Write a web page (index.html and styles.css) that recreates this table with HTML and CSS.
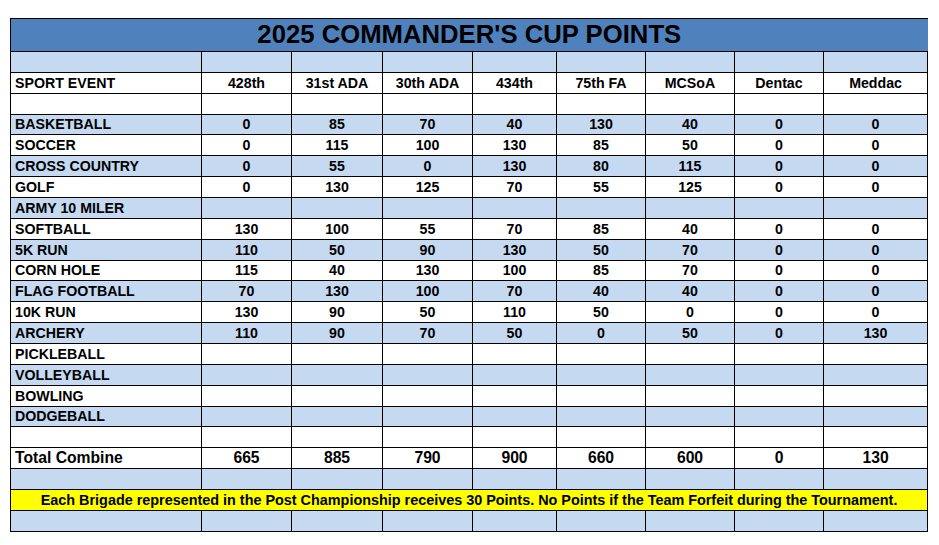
FILE: index.html
```html
<!DOCTYPE html>
<html>
<head>
<meta charset="utf-8">
<title>2025 Commander's Cup Points</title>
<link rel="stylesheet" href="styles.css">
</head>
<body>
<div class="sheet">
<table class="cup">
<colgroup>
<col class="c-event"><col class="c90"><col class="c91"><col class="c90"><col class="c84"><col class="c89"><col class="c89"><col class="c89"><col class="c104">
</colgroup>
<tbody>
<tr class="title-row"><td colspan="9" class="title">2025 COMMANDER'S CUP POINTS</td></tr>
<tr class="blue"><td></td><td></td><td></td><td></td><td></td><td></td><td></td><td></td><td></td></tr>
<tr class="head"><td class="name">SPORT EVENT</td><td>428th</td><td>31st ADA</td><td>30th ADA</td><td>434th</td><td>75th FA</td><td>MCSoA</td><td>Dentac</td><td>Meddac</td></tr>
<tr><td></td><td></td><td></td><td></td><td></td><td></td><td></td><td></td><td></td></tr>
<tr class="blue"><td class="name">BASKETBALL</td><td>0</td><td>85</td><td>70</td><td>40</td><td>130</td><td>40</td><td>0</td><td>0</td></tr>
<tr><td class="name">SOCCER</td><td>0</td><td>115</td><td>100</td><td>130</td><td>85</td><td>50</td><td>0</td><td>0</td></tr>
<tr class="blue"><td class="name">CROSS COUNTRY</td><td>0</td><td>55</td><td>0</td><td>130</td><td>80</td><td>115</td><td>0</td><td>0</td></tr>
<tr><td class="name">GOLF</td><td>0</td><td>130</td><td>125</td><td>70</td><td>55</td><td>125</td><td>0</td><td>0</td></tr>
<tr class="blue"><td class="name">ARMY 10 MILER</td><td></td><td></td><td></td><td></td><td></td><td></td><td></td><td></td></tr>
<tr><td class="name">SOFTBALL</td><td>130</td><td>100</td><td>55</td><td>70</td><td>85</td><td>40</td><td>0</td><td>0</td></tr>
<tr class="blue"><td class="name">5K RUN</td><td>110</td><td>50</td><td>90</td><td>130</td><td>50</td><td>70</td><td>0</td><td>0</td></tr>
<tr><td class="name">CORN HOLE</td><td>115</td><td>40</td><td>130</td><td>100</td><td>85</td><td>70</td><td>0</td><td>0</td></tr>
<tr class="blue"><td class="name">FLAG FOOTBALL</td><td>70</td><td>130</td><td>100</td><td>70</td><td>40</td><td>40</td><td>0</td><td>0</td></tr>
<tr><td class="name">10K RUN</td><td>130</td><td>90</td><td>50</td><td>110</td><td>50</td><td>0</td><td>0</td><td>0</td></tr>
<tr class="blue"><td class="name">ARCHERY</td><td>110</td><td>90</td><td>70</td><td>50</td><td>0</td><td>50</td><td>0</td><td>130</td></tr>
<tr><td class="name">PICKLEBALL</td><td></td><td></td><td></td><td></td><td></td><td></td><td></td><td></td></tr>
<tr class="blue"><td class="name">VOLLEYBALL</td><td></td><td></td><td></td><td></td><td></td><td></td><td></td><td></td></tr>
<tr><td class="name">BOWLING</td><td></td><td></td><td></td><td></td><td></td><td></td><td></td><td></td></tr>
<tr class="blue"><td class="name">DODGEBALL</td><td></td><td></td><td></td><td></td><td></td><td></td><td></td><td></td></tr>
<tr><td></td><td></td><td></td><td></td><td></td><td></td><td></td><td></td><td></td></tr>
<tr class="total"><td class="name">Total Combine</td><td>665</td><td>885</td><td>790</td><td>900</td><td>660</td><td>600</td><td>0</td><td>130</td></tr>
<tr class="blue"><td></td><td></td><td></td><td></td><td></td><td></td><td></td><td></td><td></td></tr>
<tr class="note-row"><td colspan="9" class="note">Each Brigade represented in the Post Championship receives 30 Points. No Points if the Team Forfeit during the Tournament.</td></tr>
<tr class="blue"><td></td><td></td><td></td><td></td><td></td><td></td><td></td><td></td><td></td></tr>
</tbody>
</table>
</div>
</body>
</html>
```

FILE: styles.css
```css
html, body {
  margin: 0;
  padding: 0;
  background: #ffffff;
}
.sheet {
  padding: 18px 0 0 10px;
}
.cup {
  border-collapse: collapse;
  table-layout: fixed;
  width: 918px;
  font-family: "Liberation Sans", Arial, sans-serif;
  font-weight: bold;
  font-size: 14.2px;
  color: #000;
}
.c-event { width: 191px; }
.c90 { width: 90px; }
.c91 { width: 91px; }
.c84 { width: 84px; }
.c89 { width: 89px; }
.c104 { width: 104px; }
.cup tr {
  height: 20.87px;
}
.cup td {
  border: 1px solid #000;
  padding: 0 0 2px 0;
  text-align: center;
  vertical-align: bottom;
  line-height: 16px;
  white-space: nowrap;
  overflow: hidden;
}
.cup td.name {
  text-align: left;
  padding-left: 4px;
}
.blue td {
  background: #c5d9f1;
}
.cup tr.title-row {
  height: 33px;
}
.title-row td.title {
  background: #4f81bd;
  border-right: none;
  font-size: 25.7px;
  line-height: 28px;
  vertical-align: bottom;
  padding: 0 0 3px 0;
  text-align: center;
}
.total td {
  font-size: 15.7px;
}
.note-row td.note {
  background: #ffff00;
  font-size: 14.4px;
  text-align: center;
}
```
